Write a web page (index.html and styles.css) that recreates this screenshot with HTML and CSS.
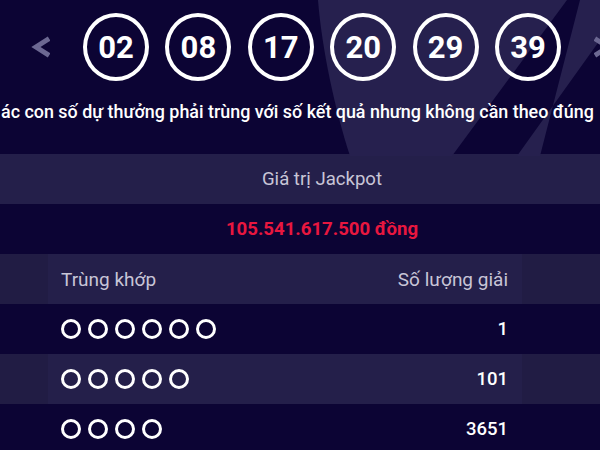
FILE: index.html
```html
<!DOCTYPE html>
<html lang="vi">
<head>
    <meta charset="UTF-8">
    <meta name="viewport" content="width=device-width, initial-scale=1.0">
    <title>Kết quả Mega 6/45</title>
    <link rel="stylesheet" href="styles.css">
</head>
<body>
    <div class="page">
        <!-- decorative background shape behind the balls -->
        <svg class="deco" width="600" height="160" viewBox="0 0 600 160">
            <path d="M318 0 C 322 50, 335 110, 350 156 L 452 156 L 567 0 Z" fill="#26204e"/>
            <path d="M580 0 L 600 0 L 600 40 L 517 156 L 540 156 Z" fill="#26204e"/>
        </svg>

        <div class="result">
            <span class="arrow">
                <svg width="20" height="24" viewBox="0 0 20 24"><polyline points="17,5 6,12 17,19" fill="none" stroke="#6c6892" stroke-width="5" stroke-linecap="square" stroke-linejoin="miter"/></svg>
            </span>
            <div class="balls">
                <span class="ball">02</span>
                <span class="ball">08</span>
                <span class="ball">17</span>
                <span class="ball">20</span>
                <span class="ball">29</span>
                <span class="ball">39</span>
            </div>
            <span class="arrow">
                <svg width="20" height="24" viewBox="0 0 20 24"><polyline points="3,5 14,12 3,19" fill="none" stroke="#6c6892" stroke-width="5" stroke-linecap="square" stroke-linejoin="miter"/></svg>
            </span>
        </div>

        <p class="note">ác con số dự thưởng phải trùng với số kết quả nhưng không cần theo đúng</p>

        <div class="prizes">
            <div class="row light single">Giá trị Jackpot</div>
            <div class="row dark single jackpot">105.541.617.500 đồng</div>

            <div class="row light cols head">
                <span class="edge"></span>
                <span class="match">Trùng khớp</span>
                <span class="count">Số lượng giải</span>
                <span class="edge"></span>
            </div>
            <div class="row dark cols">
                <span class="edge"></span>
                <span class="match"><i class="dot"></i><i class="dot"></i><i class="dot"></i><i class="dot"></i><i class="dot"></i><i class="dot"></i></span>
                <span class="count">1</span>
                <span class="edge"></span>
            </div>
            <div class="row light cols">
                <span class="edge"></span>
                <span class="match"><i class="dot"></i><i class="dot"></i><i class="dot"></i><i class="dot"></i><i class="dot"></i></span>
                <span class="count">101</span>
                <span class="edge"></span>
            </div>
            <div class="row dark cols">
                <span class="edge"></span>
                <span class="match"><i class="dot"></i><i class="dot"></i><i class="dot"></i><i class="dot"></i></span>
                <span class="count">3651</span>
                <span class="edge"></span>
            </div>
        </div>
    </div>
</body>
</html>
```

FILE: styles.css
```css
*{
    box-sizing: border-box;
}
body{
    margin: 0;
    background-color: #0c0434;
    font-family: Roboto, "Noto Sans", sans-serif;
    color: #ffffff;
}
.page{
    position: relative;
    width: 600px;
    height: 450px;
    overflow: hidden;
}
.deco{
    position: absolute;
    top: 0;
    left: 0;
}
.result{
    position: relative;
    display: flex;
    align-items: center;
    gap: 33px;
    padding: 13px 0 0 30px;
}
.arrow{
    display: flex;
    width: 20px;
    flex-shrink: 0;
}
.balls{
    display: flex;
    gap: 16.4px;
}
.ball{
    display: flex;
    align-items: center;
    justify-content: center;
    width: 66px;
    height: 68px;
    border: 4px solid #ffffff;
    border-radius: 50%;
    font-size: 31px;
    font-weight: 700;
    flex-shrink: 0;
}
.note{
    position: relative;
    margin: 20px 0 0 1px;
    white-space: nowrap;
    font-size: 17.9px;
    font-weight: 500;
    line-height: 22px;
}
.prizes{
    margin-top: 31px;
}
.row{
    height: 50px;
}
.light{
    background-color: #241f4a;
}
.dark{
    background-color: #0c0434;
}
.single{
    display: flex;
    align-items: center;
    justify-content: center;
    padding-left: 44px;
    font-size: 18.6px;
    color: #c8c5d7;
}
.jackpot{
    color: #e8173f;
    font-weight: 700;
}
.cols{
    display: grid;
    grid-template-columns: 48px 1fr 1fr 78px;
    align-items: stretch;
}
.cols > span{
    display: flex;
    align-items: center;
}
.light .edge{
    background-color: rgba(0, 0, 0, 0.07);
}
.match{
    gap: 7px;
    padding-left: 13px;
}
.count{
    justify-content: flex-end;
    padding-right: 14px;
    font-size: 18.5px;
    font-weight: 500;
}
.head .match,
.head .count{
    font-size: 19px;
    color: #c8c5d7;
    font-weight: 400;
}
.dot{
    width: 20px;
    height: 20px;
    border: 3px solid #ffffff;
    border-radius: 50%;
}
```
